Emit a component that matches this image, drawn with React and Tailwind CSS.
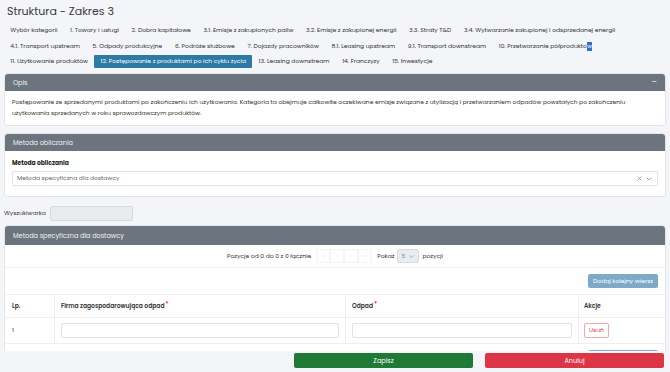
import React from 'react';
import { X, ChevronDown } from 'lucide-react';

const tabRows = [
  ['Wybór kategorii', '1. Towary i usługi', '2. Dobra kapitałowe', '3.1. Emisje z zakupionych paliw', '3.2. Emisje z zakupionej energii', '3.3. Straty T&D', '3.4. Wytwarzanie zakupionej i odsprzedanej energii'],
  ['4.1. Transport upstream', '5. Odpady produkcyjne', '6. Podróże służbowe', '7. Dojazdy pracowników', '8.1. Leasing upstream', '9.1. Transport downstream', '10. Przetwarzanie półprodukto'],
  ['11. Użytkowanie produktów', '12. Postępowanie z produktami po ich cyklu życia', '13. Leasing downstream', '14. Franczyzy', '15. Inwestycje'],
];

const ACTIVE = '12. Postępowanie z produktami po ich cyklu życia';

function CardHeader({ title, minus }) {
  return (
    <div className="flex items-center justify-between bg-[#6c757d] px-2 h-[17px] rounded-t-[3px]">
      <span className="text-[6.5px] text-[#eef0f2]">{title}</span>
      {minus && <span className="text-[8px] text-[#eef0f2] leading-none">–</span>}
    </div>
  );
}

export default function App() {
  return (
    <div className="h-screen overflow-hidden bg-[#f4f5f9] text-[#333] font-['Poppins','Open_Sans',sans-serif] relative">
      <div className="px-1 pt-[3px]">
        <h1 className="text-[11px] text-[#3a3a3a] pl-[3px] leading-[16px]">Struktura - Zakres 3</h1>

        {/* Tabs */}
        <div className="mt-[5px] flex flex-col gap-[2.5px]">
          {tabRows.map((row, i) => (
            <div key={i} className="flex items-center h-[13px]">
              {row.map((t) => {
                const isActive = t === ACTIVE;
                const last = t.endsWith('półprodukto');
                return (
                  <span
                    key={t}
                    className={
                      'text-[6px] px-[6.3px] h-[13px] flex items-center whitespace-nowrap ' +
                      (isActive ? 'bg-[#2d7aa5] text-white rounded-[1px]' : 'text-[#333]')
                    }
                  >
                    {t}
                    {last && <span className="bg-[#2f6fd6] text-white">w</span>}
                  </span>
                );
              })}
            </div>
          ))}
        </div>

        {/* Opis */}
        <div className="mt-[5px] bg-white rounded-[3px] border border-[#e3e5ea]">
          <CardHeader title="Opis" minus />
          <div className="px-[7px] pt-[6px] pb-[6px] text-[6px] leading-[11px] text-[#333]">
            Postępowanie ze sprzedanymi produktami po zakończeniu ich użytkowania. Kategoria ta obejmuje całkowite oczekiwane emisje związane z utylizacją i przetwarzaniem odpadów powstałych po zakończeniu użytkowania sprzedanych w roku sprawozdawczym produktów.
          </div>
        </div>

        {/* Metoda obliczania */}
        <div className="mt-[7px] bg-white rounded-[3px] border border-[#e3e5ea]">
          <CardHeader title="Metoda obliczania" />
          <div className="px-[7px] pt-[7px] pb-[10px]">
            <div className="text-[6px] font-bold text-[#222] leading-[10px]">Metoda obliczania</div>
            <div className="mt-[3px] h-[15px] border border-[#dfe2e6] rounded-[2px] flex items-center justify-between pl-[4px] pr-[4px]">
              <span className="text-[6px] text-[#666]">Metoda specyficzna dla dostawcy</span>
              <span className="flex items-center gap-[2px] text-[#777]">
                <X size={7} strokeWidth={2} />
                <ChevronDown size={8} strokeWidth={2} />
              </span>
            </div>
          </div>
        </div>

        {/* Wyszukiwarka */}
        <div className="mt-[9px] flex items-center gap-[4px]">
          <span className="text-[6px] text-[#333]">Wyszukiwarka</span>
          <div className="w-[83px] h-[15px] bg-[#e9ecef] border border-[#d6dade] rounded-[2px]" />
        </div>

        {/* Metoda specyficzna */}
        <div className="mt-[4px] bg-white rounded-[3px] border border-[#e3e5ea]">
          <div className="flex items-center bg-[#6c757d] px-2 h-[19px] rounded-t-[3px]">
            <span className="text-[6.5px] text-[#eef0f2]">Metoda specyficzna dla dostawcy</span>
          </div>
          <div className="flex items-center justify-center h-[23px] border-b border-[#eceef1] gap-[3px]">
            <span className="text-[6px] text-[#333]">Pozycje od 0 do 0 z 0 łącznie</span>
            <div className="flex ml-[2px]">
              {['«', '‹', '›', '»'].map((c) => (
                <span key={c} className="w-[14px] h-[14px] border border-[#f3f4f6] flex items-center justify-center text-[6px] text-[#dde0e4]">{c}</span>
              ))}
            </div>
            <span className="text-[6px] text-[#333] ml-[2px]">Pokaż</span>
            <span className="w-[22px] h-[14px] bg-[#e9ecef] border border-[#d6dade] rounded-[2px] flex items-center justify-center gap-[3px] text-[6px] text-[#888]">
              5 <ChevronDown size={7} strokeWidth={2} />
            </span>
            <span className="text-[6px] text-[#333]">pozycji</span>
          </div>
          <div className="flex justify-end px-[7px] pt-[6px] pb-[6px]">
            <button className="h-[14px] px-[5px] bg-[#7eaac9] text-white text-[6px] rounded-[2px]">Dodaj kolejny wiersz</button>
          </div>
          <div className="grid grid-cols-[50px_291px_233px_1fr] border-t border-[#eceef1] text-[6px]">
            <div className="h-[22px] flex items-center px-[7px] font-semibold text-[#333] border-r border-[#eceef1]">Lp.</div>
            <div className="h-[22px] flex items-center px-[6px] font-semibold text-[#333] border-r border-[#eceef1]">Firma zagospodarowująca odpad<span className="text-[#dc3545] self-start mt-[5px] ml-[1px]">*</span></div>
            <div className="h-[22px] flex items-center px-[6px] font-semibold text-[#333] border-r border-[#eceef1]">Odpad<span className="text-[#dc3545] self-start mt-[5px] ml-[1px]">*</span></div>
            <div className="h-[22px] flex items-center px-[5px] font-semibold text-[#333]">Akcje</div>

            <div className="h-[26px] flex items-center px-[7px] text-[#333] border-r border-t border-[#eceef1]">1</div>
            <div className="h-[26px] flex items-center px-[6px] border-r border-t border-[#eceef1]">
              <div className="w-full h-[15px] border border-[#dfe2e6] rounded-[2px]" />
            </div>
            <div className="h-[26px] flex items-center px-[6px] border-r border-t border-[#eceef1]">
              <div className="w-full h-[15px] border border-[#dfe2e6] rounded-[2px]" />
            </div>
            <div className="h-[26px] flex items-center px-[5px] border-t border-[#eceef1]">
              <button className="h-[15px] px-[4px] border border-[#f0a7ae] text-[#dc3545] text-[6px] rounded-[2px]">Usuń</button>
            </div>
          </div>
          <div className="flex justify-end px-[7px] pt-[6px] pb-[6px] border-t border-[#eceef1]">
            <button className="h-[14px] px-[5px] bg-[#7eaac9] text-white text-[6px] rounded-[2px]">Dodaj kolejny wiersz</button>
          </div>
        </div>
      </div>

      {/* Footer */}
      <div className="absolute bottom-0 left-0 right-0 h-[21px] bg-[#f4f5f9] flex items-start pt-[2px] pl-[294px] pr-[6px] gap-[12px]">
        <button className="w-[179px] h-[15px] bg-[#1f7a35] text-white text-[6.5px] rounded-[2px]">Zapisz</button>
        <button className="flex-1 h-[15px] bg-[#dc3545] text-white text-[6.5px] rounded-[2px]">Anuluj</button>
      </div>
    </div>
  );
}
